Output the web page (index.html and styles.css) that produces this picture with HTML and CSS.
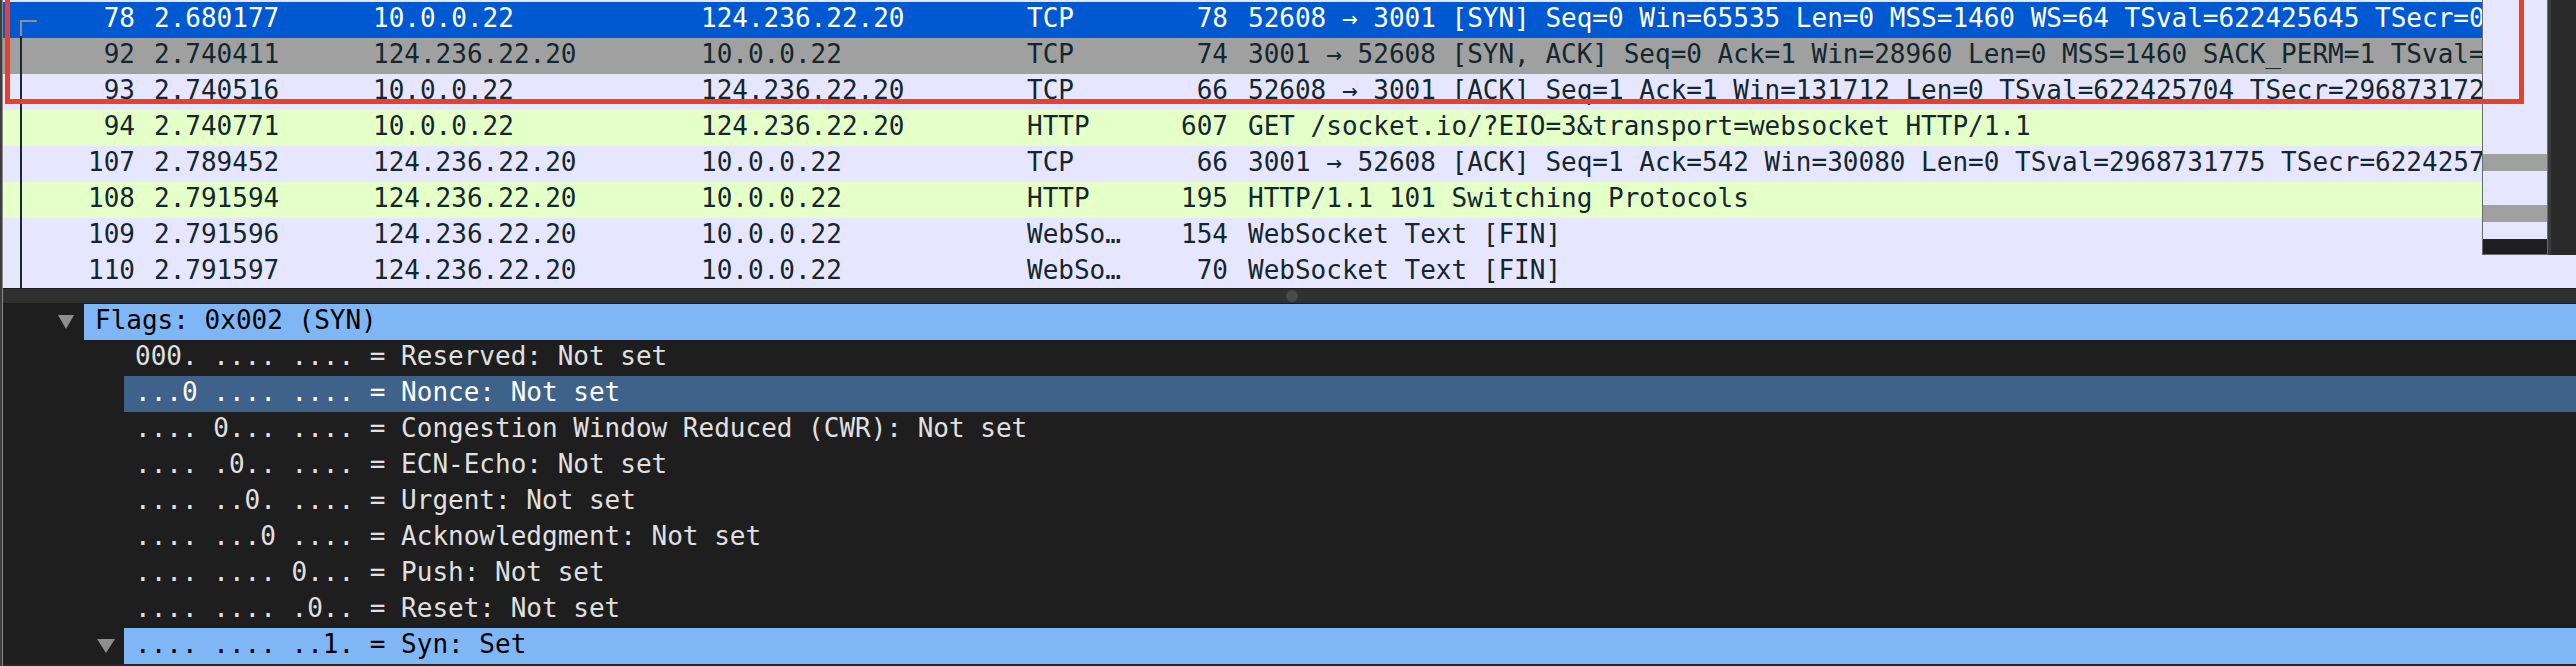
FILE: index.html
```html
<!DOCTYPE html>
<html>
<head>
<meta charset="utf-8">
<link rel="stylesheet" href="styles.css">
</head>
<body>
<div class="app">
  <div class="packets">
    <div class="rows">
      <div class="row sel"><span class="no">78</span><span class="time">2.680177</span><span class="src">10.0.0.22</span><span class="dst">124.236.22.20</span><span class="proto">TCP</span><span class="len">78</span><span class="info">52608 → 3001 [SYN] Seq=0 Win=65535 Len=0 MSS=1460 WS=64 TSval=622425645 TSecr=0 SACK_PERM=1</span></div>
      <div class="row gray"><span class="no">92</span><span class="time">2.740411</span><span class="src">124.236.22.20</span><span class="dst">10.0.0.22</span><span class="proto">TCP</span><span class="len">74</span><span class="info">3001 → 52608 [SYN, ACK] Seq=0 Ack=1 Win=28960 Len=0 MSS=1460 SACK_PERM=1 TSval=2968731716 TSecr=622425645 WS=128</span></div>
      <div class="row tcp"><span class="no">93</span><span class="time">2.740516</span><span class="src">10.0.0.22</span><span class="dst">124.236.22.20</span><span class="proto">TCP</span><span class="len">66</span><span class="info">52608 → 3001 [ACK] Seq=1 Ack=1 Win=131712 Len=0 TSval=622425704 TSecr=2968731728</span></div>
      <div class="row http"><span class="no">94</span><span class="time">2.740771</span><span class="src">10.0.0.22</span><span class="dst">124.236.22.20</span><span class="proto">HTTP</span><span class="len">607</span><span class="info">GET /socket.io/?EIO=3&amp;transport=websocket HTTP/1.1</span></div>
      <div class="row tcp"><span class="no">107</span><span class="time">2.789452</span><span class="src">124.236.22.20</span><span class="dst">10.0.0.22</span><span class="proto">TCP</span><span class="len">66</span><span class="info">3001 → 52608 [ACK] Seq=1 Ack=542 Win=30080 Len=0 TSval=2968731775 TSecr=622425704</span></div>
      <div class="row http"><span class="no">108</span><span class="time">2.791594</span><span class="src">124.236.22.20</span><span class="dst">10.0.0.22</span><span class="proto">HTTP</span><span class="len">195</span><span class="info">HTTP/1.1 101 Switching Protocols</span></div>
      <div class="row tcp"><span class="no">109</span><span class="time">2.791596</span><span class="src">124.236.22.20</span><span class="dst">10.0.0.22</span><span class="proto">WebSo…</span><span class="len">154</span><span class="info">WebSocket Text [FIN]</span></div>
      <div class="row tcp"><span class="no">110</span><span class="time">2.791597</span><span class="src">124.236.22.20</span><span class="dst">10.0.0.22</span><span class="proto">WebSo…</span><span class="len">70</span><span class="info">WebSocket Text [FIN]</span></div>
    </div>
    <div class="tl-corner"></div>
    <div class="tl-line"></div>
    <div class="minimap">
      <div class="mm-gap g1"></div>
      <div class="mm-bar gray"></div>
      <div class="mm-gap g2"></div>
      <div class="mm-bar gray"></div>
      <div class="mm-gap g3"></div>
      <div class="mm-bar black"></div>
    </div>
    <div class="vscroll"></div>
    <div class="redbox"></div>
  </div>
  <div class="splitter"><span class="handle"></span></div>
  <div class="tree">
    <div class="node lvl0"><span class="twisty"><svg width="16" height="14" viewBox="0 0 16 14"><polygon points="0,0 16,0 8,14" fill="#8e8e8e"/></svg></span><span class="label hl">Flags: 0x002 (SYN)</span></div>
    <div class="node lvl1"><span class="twisty"></span><span class="label">000. .... .... = Reserved: Not set</span></div>
    <div class="node lvl1"><span class="twisty"></span><span class="label cur">...0 .... .... = Nonce: Not set</span></div>
    <div class="node lvl1"><span class="twisty"></span><span class="label">.... 0... .... = Congestion Window Reduced (CWR): Not set</span></div>
    <div class="node lvl1"><span class="twisty"></span><span class="label">.... .0.. .... = ECN-Echo: Not set</span></div>
    <div class="node lvl1"><span class="twisty"></span><span class="label">.... ..0. .... = Urgent: Not set</span></div>
    <div class="node lvl1"><span class="twisty"></span><span class="label">.... ...0 .... = Acknowledgment: Not set</span></div>
    <div class="node lvl1"><span class="twisty"></span><span class="label">.... .... 0... = Push: Not set</span></div>
    <div class="node lvl1"><span class="twisty"></span><span class="label">.... .... .0.. = Reset: Not set</span></div>
    <div class="node lvl1"><span class="twisty"><svg width="18" height="14" viewBox="0 0 18 14"><polygon points="0,0 18,0 9,14" fill="#8e8e8e"/></svg></span><span class="label hl">.... .... ..1. = Syn: Set</span></div>
  </div>
</div>
</body>
</html>
```
FILE: styles.css
```css
html, body {
  margin: 0;
  padding: 0;
}
body {
  width: 2576px;
  height: 666px;
  overflow: hidden;
  background: #3d3d3d;
  padding-left: 2px;
  box-sizing: border-box;
  font-family: "DejaVu Sans Mono", "Liberation Mono", monospace;
  font-size: 26px;
}
.app {
  display: flex;
  flex-direction: column;
  height: 666px;
  border-left: 1px solid #8a8a8a;
  background: #1e1e1e;
}

/* packet list */
.packets {
  position: relative;
  height: 288px;
  flex: none;
  background: #e7e6ff;
  overflow: hidden;
}
.rows {
  padding-top: 2px;
}
.row {
  display: flex;
  height: 36px;
  box-sizing: border-box;
  line-height: 32px;
  padding-bottom: 4px;
  white-space: pre;
  color: #12272e;
  overflow: hidden;
}
.row.sel { background: #0059d0; color: #ffffff; }
.row.gray { background: #a0a0a0; }
.row.tcp { background: #e7e6ff; }
.row.http { background: #e4ffc7; }
.row span { flex: none; overflow: hidden; }
.no { width: 132px; text-align: right; }
.time { width: 219px; margin-left: 19px; }
.src { width: 328px; }
.dst { width: 326px; }
.proto { width: 120px; }
.len { width: 81px; text-align: right; }
.info { margin-left: 20px; }

.tl-corner {
  position: absolute;
  left: 17px;
  top: 20px;
  width: 15px;
  height: 16px;
  border-top: 2px solid #8f8f8f;
  border-left: 2px solid #8f8f8f;
}
.tl-line {
  position: absolute;
  left: 17px;
  top: 36px;
  bottom: 0;
  width: 2px;
  background: #1c2831;
}

.minimap {
  position: absolute;
  top: 0;
  right: 28px;
  width: 66px;
  height: 255px;
  box-sizing: border-box;
  border-left: 1px solid #6b6b6b;
  border-right: 1px solid #6b6b6b;
  border-bottom: 1px solid #6b6b6b;
  background: #e7e6ff;
  display: flex;
  flex-direction: column;
}
.mm-gap.g1 { height: 154px; }
.mm-gap.g2 { height: 34px; }
.mm-gap.g3 { height: 17px; }
.mm-bar { height: 17px; }
.mm-bar.gray { background: #a0a0a0; }
.mm-bar.black { flex: 1; background: #1e1e1e; }

.vscroll {
  position: absolute;
  top: 0;
  right: 0;
  width: 28px;
  height: 255px;
  box-sizing: border-box;
  background: #2a2a2a;
  border-left: 3px solid #3a3a3a;
}

.redbox {
  position: absolute;
  left: 2px;
  top: -10px;
  width: 2519px;
  height: 114px;
  box-sizing: border-box;
  border: 5px solid #e8402c;
}

/* splitter */
.splitter {
  flex: none;
  height: 16px;
  box-sizing: border-box;
  background: #303030;
  border-top: 1px solid #1b1b1b;
  border-bottom: 1px solid #1b1b1b;
  display: flex;
  justify-content: center;
  align-items: center;
  padding-left: 5px;
}
.handle {
  width: 12px;
  height: 12px;
  border-radius: 50%;
  background: #4a4a4a;
}

/* detail tree */
.tree {
  flex: 1;
  background: #1e1e1e;
  color: #e0e0e0;
  border-bottom: 2px solid #262626;
}
.node {
  display: flex;
  height: 36px;
}
.twisty {
  flex: none;
  display: flex;
  justify-content: flex-end;
  align-items: flex-start;
  padding-top: 11px;
  box-sizing: border-box;
}
.lvl0 .twisty { width: 81px; padding-right: 10px; }
.lvl1 .twisty { width: 121px; padding-right: 9px; }
.label {
  flex: 1;
  padding-left: 11px;
  line-height: 32px;
  white-space: pre;
}
.label.hl { background: #7fb7f6; color: #000000; }
.label.cur { background: #3e6289; color: #ffffff; }
```
